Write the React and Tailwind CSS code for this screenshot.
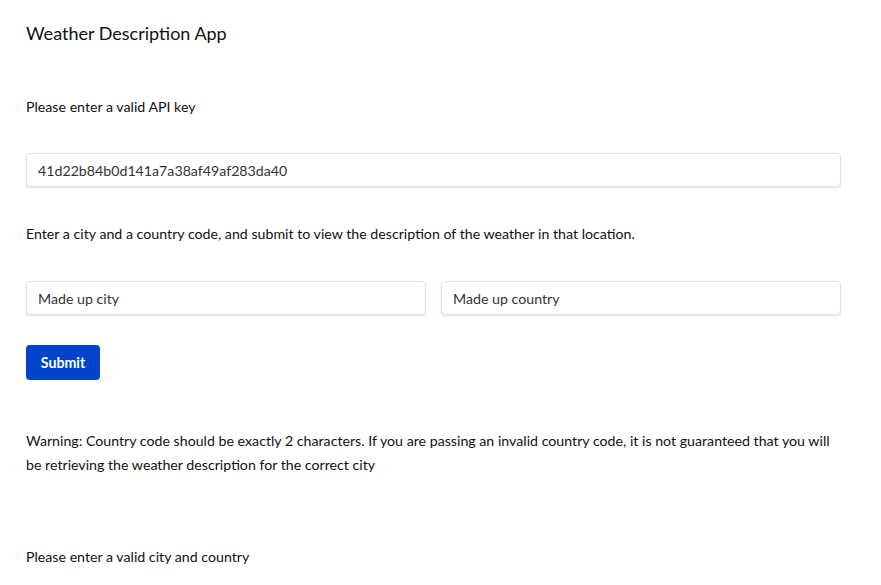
import { useState } from 'react';

const inputClass =
  'w-full h-[34px] px-[11px] rounded border border-[#e3e3e3] bg-white text-[14.2px] text-[#333] shadow-[0_1px_2px_rgba(0,0,0,0.12)] outline-none';

const App = () => {
  const [apiKey, setApiKey] = useState('41d22b84b0d141a7a38af49af283da40');
  const [city, setCity] = useState('Made up city');
  const [country, setCountry] = useState('Made up country');

  return (
    <div className="min-h-screen bg-white pl-[26px] pr-[40px] text-[#111] font-['Lato','Noto_Sans',sans-serif]">
      <h1 className="pt-[21px] text-[18px] leading-[24px] font-normal">Weather Description App</h1>

      <p className="mt-[52px] text-[14.2px] leading-[20px]">Please enter a valid API key</p>

      <input
        value={apiKey}
        onChange={(e) => setApiKey(e.target.value)}
        className={`mt-[36px] ${inputClass}`}
      />

      <p className="mt-[37px] text-[14.2px] leading-[20px]">
        Enter a city and a country code, and submit to view the description of the weather in that location.
      </p>

      <div className="mt-[37px] flex gap-[15px]">
        <input value={city} onChange={(e) => setCity(e.target.value)} className={inputClass} />
        <input value={country} onChange={(e) => setCountry(e.target.value)} className={inputClass} />
      </div>

      <button className="mt-[30px] h-[35px] w-[74px] rounded bg-[#0044cc] text-[14.2px] font-bold text-white">
        Submit
      </button>

      <p className="mt-[49px] text-[14.2px] leading-[24px]">
        Warning: Country code should be exactly 2 characters. If you are passing an invalid country code, it is not guaranteed that you will be retrieving the weather description for the correct city
      </p>

      <p className="mt-[70px] text-[14.2px] leading-[20px]">Please enter a valid city and country</p>
    </div>
  );
};

export default App;
